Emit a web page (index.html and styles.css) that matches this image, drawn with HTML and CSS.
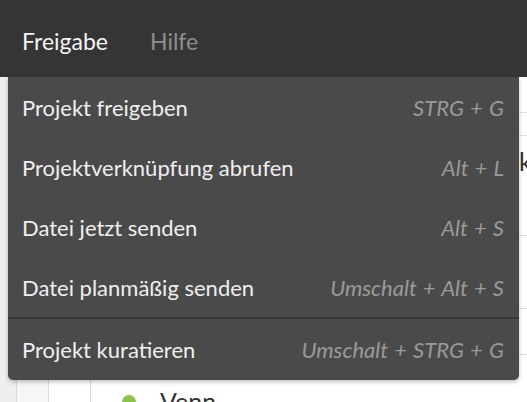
FILE: index.html
```html
<!DOCTYPE html>
<html lang="de">
<head>
<meta charset="utf-8">
<title>Freigabe</title>
<link rel="stylesheet" href="styles.css">
</head>
<body>
<header class="topbar">
  <span class="top-item active">Freigabe</span>
  <span class="top-item">Hilfe</span>
</header>
<div class="page">
  <div class="col col-a"></div>
  <div class="col col-b"></div>
  <div class="col col-c"></div>
  <div class="main">
    <div class="row r1"></div>
    <div class="row r2"></div>
    <div class="row r3"><span class="peek">k</span></div>
    <div class="row r4"></div>
    <div class="row r5"></div>
    <div class="row r6"><span class="dot"></span><span class="venn">Venn</span></div>
  </div>
  <nav class="menu">
    <div class="item"><span class="label">Projekt freigeben</span><span class="key">STRG + G</span></div>
    <div class="item"><span class="label">Projektverknüpfung abrufen</span><span class="key">Alt + L</span></div>
    <div class="item"><span class="label">Datei jetzt senden</span><span class="key">Alt + S</span></div>
    <div class="item"><span class="label">Datei planmäßig senden</span><span class="key">Umschalt + Alt + S</span></div>
    <div class="sep"></div>
    <div class="item last"><span class="label">Projekt kuratieren</span><span class="key">Umschalt + STRG + G</span></div>
  </nav>
</div>
</body>
</html>
```

FILE: styles.css
```css
* { box-sizing: border-box; }
html, body { margin: 0; padding: 0; }
body {
  width: 527px;
  height: 402px;
  overflow: hidden;
  background: #ffffff;
  font-family: Lato, "Noto Sans", sans-serif;
}
.topbar {
  height: 77px;
  background: #353535;
  display: flex;
  align-items: center;
  gap: 42px;
  padding: 4px 0 0 22px;
}
.top-item {
  font-size: 23px;
  color: #8e8e8e;
}
.top-item.active { color: #f4f4f4; }
.page {
  position: relative;
  height: 325px;
  display: flex;
}
.col { height: 100%; }
.col-a { width: 17px; background: #eeeeee; border-right: 1px solid #d8d8d8; }
.col-b { width: 32px; background: #f6f6f6; border-right: 1px solid #dcdcdc; }
.col-c { width: 42px; background: #ffffff; border-right: 1px solid #dcdcdc; }
.main { flex: 1; display: flex; flex-direction: column; }
.row { border-bottom: 1px solid #e0e0e0; position: relative; }
.r1 { height: 36px; }
.r2 { height: 23px; }
.r3 { height: 100px; }
.r4 { height: 73px; }
.r5 { height: 46px; }
.r6 { flex: 1; border-bottom: 0; display: flex; align-items: flex-end; gap: 22px; padding-left: 31px; }
.peek {
  position: absolute;
  left: 428px;
  top: 10px;
  font-size: 25px;
  color: #333;
}
.dot { width: 14px; height: 14px; border-radius: 50%; background: #8bc34a; margin-bottom: -7px; }
.venn { font-size: 25px; color: #333; line-height: 1; margin-bottom: -12px; margin-left: 2px; }
.menu {
  position: absolute;
  left: 8px;
  top: 0;
  width: 511px;
  background: #4a4a4a;
  border-radius: 0 0 5px 5px;
  box-shadow: 0 2px 4px rgba(0,0,0,0.25);
}
.item {
  height: 60px;
  display: flex;
  align-items: center;
  justify-content: space-between;
  padding: 0 15px 0 14px;
}
.item.last { height: 61px; }
.label { font-size: 22px; color: #efefef; }
.key { font-size: 22px; font-style: italic; color: #9a9a9a; word-spacing: 1px; }
.sep { height: 2px; background: #363636; }
```
